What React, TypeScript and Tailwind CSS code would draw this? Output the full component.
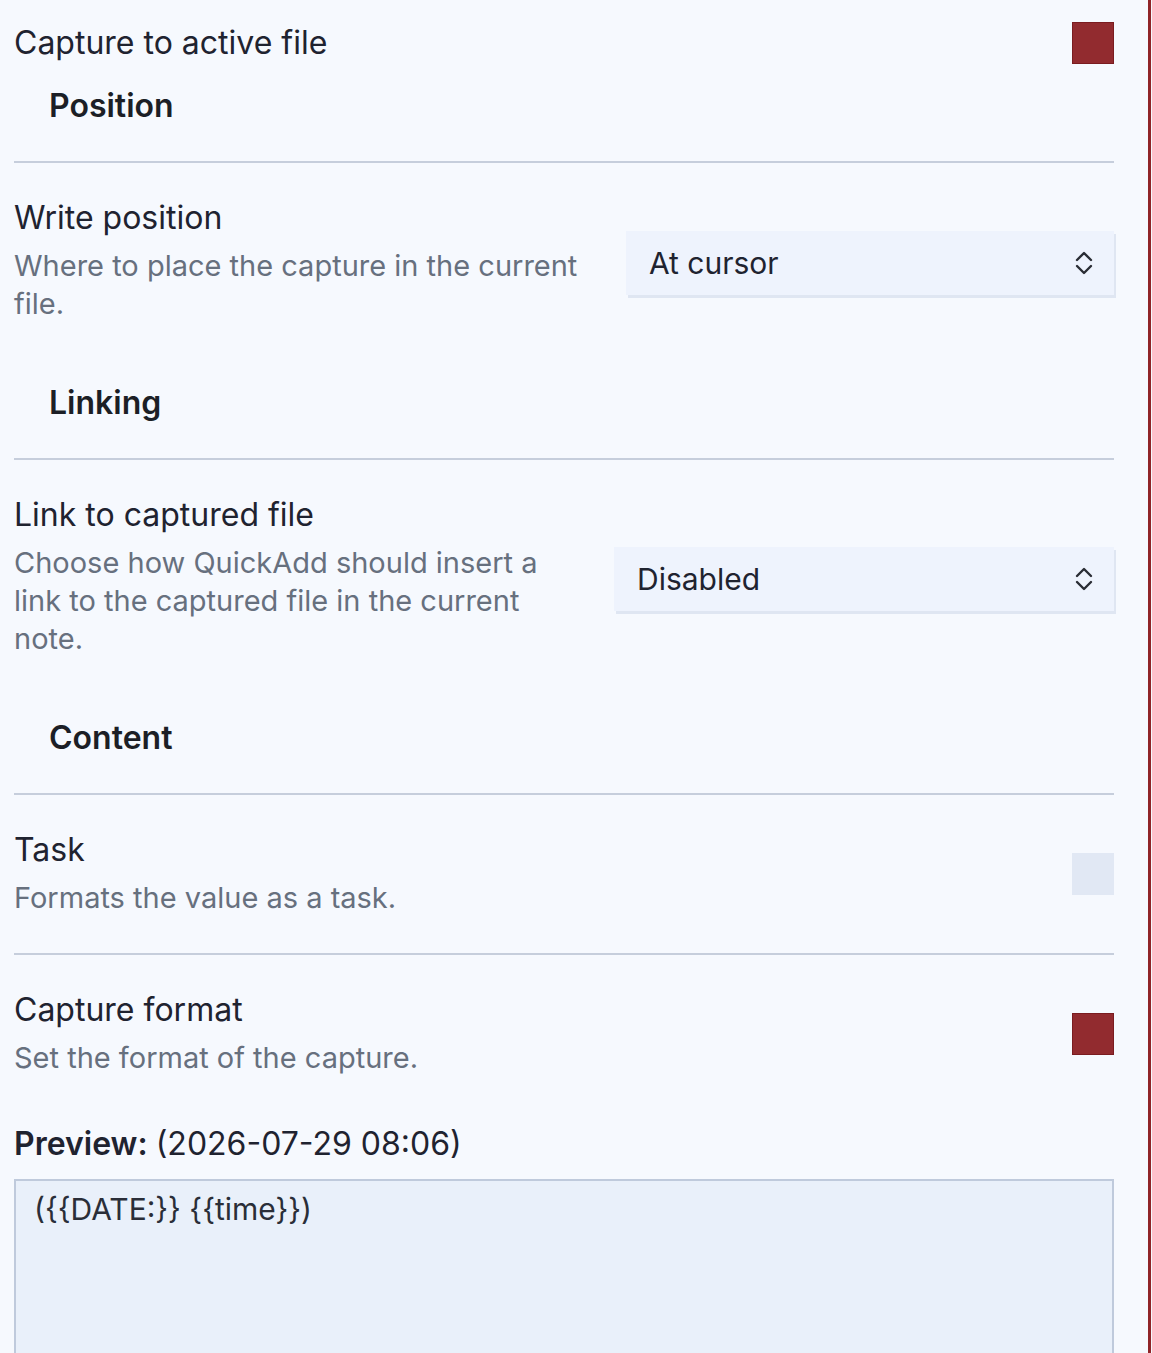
import React from 'react';

const font = { fontFamily: 'Inter, "Noto Sans", sans-serif' };

function Toggle({ on }: { on: boolean }) {
  return on ? (
    <div className="h-[42px] w-[42px] shrink-0 border border-[#7a1c20] bg-[#922b2f]" />
  ) : (
    <div className="h-[42px] w-[42px] shrink-0 bg-[#e1e8f4]" />
  );
}

function Heading({ children, first }: { children: React.ReactNode; first?: boolean }) {
  return (
    <div
      className={`${first ? 'pt-[22px]' : 'pt-6'} border-b-2 border-[#c6cedc] pb-[35px] pl-[35px] text-[32px] leading-[40px] font-semibold text-[#1c1f26]`}
    >
      {children}
    </div>
  );
}

// up/down chevrons on the dropdown
function UpDown() {
  return (
    <svg width="18" height="24" viewBox="0 0 18 24" fill="none" stroke="#2a2d35" strokeWidth="2.4" strokeLinecap="round" strokeLinejoin="round">
      <path d="M2 9 L9 2 L16 9" />
      <path d="M2 15 L9 22 L16 15" />
    </svg>
  );
}

function Select({ value, width }: { value: string; width: string }) {
  return (
    <div
      className={`${width} mt-[5px] flex h-[64px] items-center justify-between bg-[#eef3fd] pl-[23px] pr-[21px] text-[30px] text-[#1f2330] shadow-[2px_3px_0_0_#dfe6f2]`}
    >
      <span>{value}</span>
      <UpDown />
    </div>
  );
}

function Setting({
  title,
  desc,
  control,
  border = true,
  infoWidth = 'w-[590px]',
}: {
  title: string;
  desc: string;
  control: React.ReactNode;
  border?: boolean;
  infoWidth?: string;
}) {
  return (
    <div className={`${border ? 'border-t-2 border-[#c6cedc]' : ''} flex items-center justify-between pt-[35px] pb-9`}>
      <div className={infoWidth}>
        <div className="text-[32px] leading-[40px] text-[#1f2330]">{title}</div>
        <div className="mt-[9px] text-[29px] leading-[38px] text-[#67707e]">{desc}</div>
      </div>
      {control}
    </div>
  );
}

export default function App() {
  return (
    <div className="flex min-h-[1353px] w-[1152px] bg-[#f6f9fe]" style={font}>
      <div className="w-[1151px] border-r-[3px] border-[#8f2428] pl-[14px] pr-[34px]">
        <div className="w-[1100px]">
          <div className="flex items-center justify-between pt-[22px]">
            <span className="text-[32px] leading-[40px] text-[#1f2330]">Capture to active file</span>
            <Toggle on />
          </div>

          <Heading first>Position</Heading>
          <Setting
            border={false}
            title="Write position"
            desc="Where to place the capture in the current file."
            infoWidth="w-[580px]"
            control={<Select value="At cursor" width="w-[488px]" />}
          />

          <Heading>Linking</Heading>
          <Setting
            border={false}
            title="Link to captured file"
            desc="Choose how QuickAdd should insert a link to the captured file in the current note."
            infoWidth="w-[560px]"
            control={<Select value="Disabled" width="w-[500px]" />}
          />

          <Heading>Content</Heading>
          <Setting border={false} title="Task" desc="Formats the value as a task." control={<Toggle on={false} />} />
          <Setting title="Capture format" desc="Set the format of the capture." control={<Toggle on />} />

          <div className="mt-[11px] text-[32px] leading-[40px] text-[#1f2330]">
            <span className="font-semibold">Preview: </span>(2026-07-29 08:06)
          </div>
          <div className="mt-[15px] h-[200px] border-2 border-[#bfcadc] bg-[#e9f0fa] px-[18px] pt-[8px] text-[30px] leading-[40px] text-[#2a2e38]">
            {'({{DATE:}} {{time}})'}
          </div>
        </div>
      </div>
    </div>
  );
}
